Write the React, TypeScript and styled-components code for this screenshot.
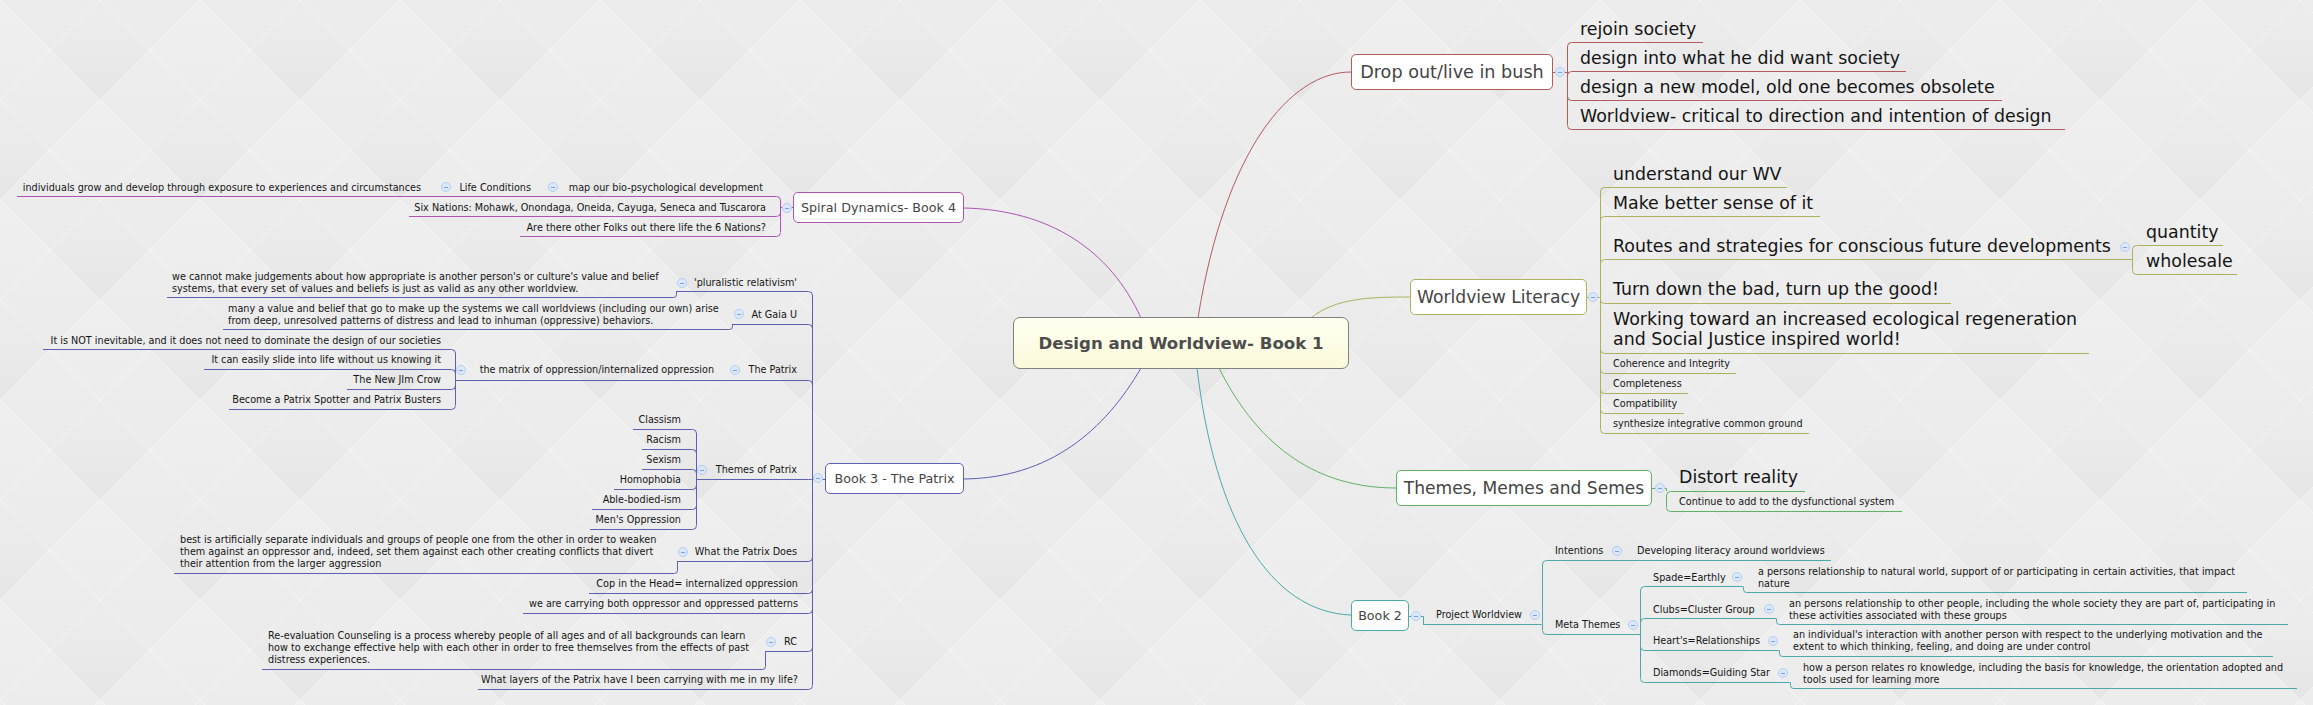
import React from 'react'
import styled, { createGlobalStyle } from 'styled-components'

const PURPLE = '#ae52b4'
const BLUE = '#5c5fb2'
const RED = '#b25a5c'
const OLIVE = '#aeb05c'
const GREEN = '#5eb262'
const TEAL = '#4ca9aa'
const R = 4

const GlobalStyle = createGlobalStyle`
  html, body {
    margin: 0;
    background: #e9e9e9;
    overflow: hidden;
  }
`

const Canvas = styled.div`
  position: relative;
  width: 2313px;
  height: 705px;
  overflow: hidden;
  font-family: "DejaVu Sans", "Liberation Sans", sans-serif;
`

const Layer = styled.svg`
  position: absolute;
  left: 0;
  top: 0;
`

const Topic = styled.div.attrs<{ $x: number; $y: number; $w: number; $h: number; $c: string }>((p) => ({
  style: { left: p.$x, top: p.$y, width: p.$w, height: p.$h, borderColor: p.$c },
}))<{ $size: number }>`
  position: absolute;
  box-sizing: border-box;
  display: flex;
  align-items: center;
  justify-content: center;
  background: #fff;
  border: 1px solid;
  border-radius: 5px;
  color: #444;
  font-size: ${(p) => p.$size}px;
  white-space: nowrap;
`

const CentralTopic = styled.div`
  position: absolute;
  left: 1013px;
  top: 317px;
  width: 336px;
  height: 52px;
  box-sizing: border-box;
  display: flex;
  align-items: center;
  justify-content: center;
  background: linear-gradient(180deg, #fffff2 0%, #fbf9da 100%);
  border: 1px solid #808080;
  border-radius: 7px;
  color: #4d4d4d;
  font-size: 16.6px;
  font-weight: 700;
  white-space: nowrap;
`

const Label = styled.div.attrs<{ $x: number; $y: number; $end?: boolean }>((p) => ({
  style: p.$end ? { right: 2313 - p.$x, top: p.$y + 1 } : { left: p.$x, top: p.$y + 1 },
}))<{ $big?: boolean }>`
  position: absolute;
  transform: translateY(-50%);
  color: #151515;
  font-size: ${(p) => (p.$big ? 17.4 : 9.67)}px;
  line-height: ${(p) => (p.$big ? 20 : 12)}px;
  white-space: pre;
`

const Fold = styled.i.attrs<{ $x: number; $y: number }>((p) => ({
  style: { left: p.$x - 5, top: p.$y - 5 },
}))`
  position: absolute;
  box-sizing: border-box;
  width: 10px;
  height: 10px;
  border: 1px solid #b4cdf3;
  border-radius: 50%;
  background: #dbe7fa;

  &::after {
    content: '';
    position: absolute;
    left: 2px;
    top: 3.5px;
    width: 4px;
    height: 1px;
    background: #7f9fdc;
  }
`

type Fan = { c: string; x: number; j: number; rows: [number, number][] }

// rails that hang off a vertical trunk, [far end of the rail, y]
const FANS: Fan[] = [
  { c: PURPLE, x: 780, j: 207, rows: [[17, 196], [409, 216], [520, 236]] },
  { c: BLUE, x: 812, j: 479, rows: [[676, 291], [732, 324], [455, 380], [696, 479], [677, 561], [589, 593], [523, 613], [765, 651], [478, 689]] },
  { c: BLUE, x: 455, j: 380, rows: [[43, 349], [204, 369], [347, 389], [229, 409]] },
  { c: BLUE, x: 696, j: 479, rows: [[633, 429], [642, 449], [642, 469], [614, 489], [592, 509], [590, 529]] },
  { c: RED, x: 1567, j: 72, rows: [[1703, 42], [1906, 71], [2002, 100], [2065, 129]] },
  { c: OLIVE, x: 1600, j: 297, rows: [[1787, 187], [1820, 216], [2132, 259], [1951, 303], [2089, 353], [1736, 373], [1688, 393], [1684, 413], [1809, 433]] },
  { c: OLIVE, x: 2132, j: 259, rows: [[2223, 245], [2237, 274]] },
  { c: GREEN, x: 1666, j: 501, rows: [[1805, 491], [1902, 511]] },
  { c: TEAL, x: 1542, j: 624, rows: [[1423, 624], [1831, 560], [1640, 634]] },
  { c: TEAL, x: 1640, j: 634, rows: [[1743, 586], [1776, 618], [1779, 650], [1790, 682]] },
]

// [far end, x of the step, upper y, lower y]
const STEPS: [string, number, number, number, number][] = [
  [BLUE, 167, 676, 291, 297],
  [BLUE, 223, 732, 324, 329],
  [BLUE, 174, 677, 561, 573],
  [BLUE, 262, 765, 651, 669],
  [TEAL, 2247, 1743, 586, 592],
  [TEAL, 2288, 1776, 618, 624],
  [TEAL, 2273, 1779, 650, 656],
  [TEAL, 2297, 1790, 682, 688],
]

const STUBS: [string, string][] = [
  [PURPLE, 'M780 207.5H793'],
  [BLUE, 'M812 479.5H825'],
  [RED, 'M1553 72.5H1567'],
  [OLIVE, 'M1587 297.5H1600'],
  [GREEN, 'M1652 488.5H1666.5V491'],
  [TEAL, 'M1409 616.5H1423.5V624'],
]

const CURVES: [string, string][] = [
  [PURPLE, 'M964 208C1050 210 1110 250 1141 318'],
  [BLUE, 'M964 479C1050 478 1105 430 1141 368'],
  [RED, 'M1351 72C1290 72 1225 150 1198 318'],
  [OLIVE, 'M1410 297C1370 297 1335 298 1311 318'],
  [GREEN, 'M1396 488C1320 488 1260 450 1219 368'],
  [TEAL, 'M1351 615C1270 612 1215 520 1197 368'],
]

const fanPaths = (f: Fan) => {
  const ys = f.rows.map((r) => r[1])
  const x = f.x + 0.5
  const trunk = `M${x} ${Math.min(...ys) + R}V${Math.max(...ys) - R}`
  const rails = f.rows.map(([from, y]) => {
    const s = x > from ? 1 : -1
    const yy = y + 0.5
    const bend = y < f.j ? R : y > f.j ? -R : 0
    return `M${from} ${yy}H${x - s * R}Q${x} ${yy} ${x} ${yy + bend}`
  })
  return [trunk, ...rails].join('')
}

const stepPath = (from: number, step: number, y1: number, y2: number) => {
  const s = step > from ? 1 : -1
  const x = step + 0.5
  return `M${x} ${y1 + 0.5}V${y2 + 0.5 - 3}Q${x} ${y2 + 0.5} ${x - s * 3} ${y2 + 0.5}H${from}`
}

const TOPICS: { t: string; x: number; y: number; w: number; h: number; c: string; size: number }[] = [
  { t: 'Spiral Dynamics- Book 4', x: 793, y: 192, w: 171, h: 31, c: PURPLE, size: 12.7 },
  { t: 'Book 3 - The Patrix', x: 825, y: 463, w: 139, h: 31, c: BLUE, size: 12.7 },
  { t: 'Drop out/live in bush', x: 1351, y: 54, w: 202, h: 36, c: RED, size: 17.6 },
  { t: 'Worldview Literacy', x: 1410, y: 279, w: 177, h: 36, c: OLIVE, size: 17.2 },
  { t: 'Themes, Memes and Semes', x: 1396, y: 470, w: 256, h: 36, c: GREEN, size: 17.1 },
  { t: 'Book 2', x: 1351, y: 600, w: 58, h: 31, c: TEAL, size: 12.7 },
]

// [text, x, centre y, right aligned]
const SMALL: [string, number, number, boolean?][] = [
  ['map our bio-psychological development', 763, 187, true],
  ['Life Conditions', 531, 187, true],
  ['individuals grow and develop through exposure to experiences and circumstances', 421, 187, true],
  ['Six Nations: Mohawk, Onondaga, Oneida, Cayuga, Seneca and Tuscarora', 766, 207, true],
  ['Are there other Folks out there life the 6 Nations?', 766, 227, true],
  ["'pluralistic relativism'", 797, 282, true],
  ["we cannot make judgements about how appropriate is another person's or culture's value and belief\nsystems, that every set of values and beliefs is just as valid as any other worldview.", 172, 282],
  ['At Gaia U', 797, 314, true],
  ['many a value and belief that go to make up the systems we call worldviews (including our own) arise\nfrom deep, unresolved patterns of distress and lead to inhuman (oppressive) behaviors.', 228, 314],
  ['The Patrix', 797, 369, true],
  ['the matrix of oppression/internalized oppression', 714, 369, true],
  ['It is NOT inevitable, and it does not need to dominate the design of our societies', 441, 340, true],
  ['It can easily slide into life without us knowing it', 441, 359, true],
  ['The New JIm Crow', 441, 379, true],
  ['Become a Patrix Spotter and Patrix Busters', 441, 399, true],
  ['Themes of Patrix', 797, 469, true],
  ['Classism', 681, 419, true],
  ['Racism', 681, 439, true],
  ['Sexism', 681, 459, true],
  ['Homophobia', 681, 479, true],
  ['Able-bodied-ism', 681, 499, true],
  ["Men's Oppression", 681, 519, true],
  ['What the Patrix Does', 797, 551, true],
  ['best is artificially separate individuals and groups of people one from the other in order to weaken\nthem against an oppressor and, indeed, set them against each other creating conflicts that divert\ntheir attention from the larger aggression', 180, 551],
  ['Cop in the Head= internalized oppression', 798, 583, true],
  ['we are carrying both oppressor and oppressed patterns', 798, 603, true],
  ['RC', 797, 641, true],
  ['Re-evaluation Counseling is a process whereby people of all ages and of all backgrounds can learn\nhow to exchange effective help with each other in order to free themselves from the effects of past\ndistress experiences.', 268, 647],
  ['What layers of the Patrix have I been carrying with me in my life?', 798, 679, true],
  ['Coherence and Integrity', 1613, 363],
  ['Completeness', 1613, 383],
  ['Compatibility', 1613, 403],
  ['synthesize integrative common ground', 1613, 423],
  ['Continue to add to the dysfunctional system', 1679, 501],
  ['Project Worldview', 1436, 614],
  ['Intentions', 1555, 550],
  ['Developing literacy around worldviews', 1637, 550],
  ['Meta Themes', 1555, 624],
  ['Spade=Earthly', 1653, 577],
  ['a persons relationship to natural world, support of or participating in certain activities, that impact\nnature', 1758, 577],
  ['Clubs=Cluster Group', 1653, 609],
  ['an persons relationship to other people, including the whole society they are part of, participating in\nthese activities associated with these groups', 1789, 609],
  ["Heart's=Relationships", 1653, 640],
  ["an individual's interaction with another person with respect to the underlying motivation and the\nextent to which thinking, feeling, and doing are under control", 1793, 640],
  ['Diamonds=Guiding Star', 1653, 672],
  ['how a person relates ro knowledge, including the basis for knowledge, the orientation adopted and\ntools used for learning more', 1803, 673],
]

const BIG: [string, number, number][] = [
  ['rejoin society', 1580, 28],
  ['design into what he did want society', 1580, 57],
  ['design a new model, old one becomes obsolete', 1580, 86],
  ['Worldview- critical to direction and intention of design', 1580, 115],
  ['understand our WV', 1613, 173],
  ['Make better sense of it', 1613, 202],
  ['Routes and strategies for conscious future developments', 1613, 245],
  ['quantity', 2146, 231],
  ['wholesale', 2146, 260],
  ['Turn down the bad, turn up the good!', 1613, 288],
  ['Working toward an increased ecological regeneration\nand Social Justice inspired world!', 1613, 328],
  ['Distort reality', 1679, 476],
]

const FOLDS: [number, number][] = [
  [446, 187], [553, 187], [787, 208],
  [682, 283], [739, 314], [735, 370], [461, 370], [702, 470], [683, 552], [771, 642], [818, 478],
  [1560, 72], [1593, 297], [2125, 247], [1660, 488],
  [1416, 616], [1535, 615], [1617, 551], [1633, 625], [1737, 577], [1769, 609], [1773, 641], [1783, 673],
]

const Backdrop = () => (
  <Layer width="2313" height="705">
    <defs>
      <linearGradient id="pane" x1="0" y1="0" x2="0" y2="1">
        <stop offset="0" stopColor="#efefef" />
        <stop offset="0.7" stopColor="#ebebeb" />
        <stop offset="1" stopColor="#e5e5e5" />
      </linearGradient>
      <pattern id="quilt" width="200" height="200" patternUnits="userSpaceOnUse">
        <polygon points="0,0 100,100 0,200 -100,100" fill="url(#pane)" />
        <polygon points="200,0 300,100 200,200 100,100" fill="url(#pane)" />
        <polygon points="100,100 200,200 100,300 0,200" fill="url(#pane)" />
        <polygon points="100,-100 200,0 100,100 0,0" fill="url(#pane)" />
        <path
          d="M0 0L200 200M100 0L200 100M0 100L100 200M200 0L0 200M100 0L0 100M200 100L100 200"
          stroke="#fff"
          strokeOpacity="0.6"
          strokeWidth="0.8"
        />
      </pattern>
    </defs>
    <rect width="2313" height="705" fill="url(#quilt)" />
  </Layer>
)

const Connectors = () => (
  <Layer width="2313" height="705" fill="none" strokeWidth="1">
    {CURVES.map(([c, d]) => (
      <path key={d} d={d} stroke={c} />
    ))}
    {FANS.map((f) => (
      <path key={`${f.x}-${f.j}`} d={fanPaths(f)} stroke={f.c} />
    ))}
    {STEPS.map(([c, from, step, y1, y2]) => (
      <path key={from} d={stepPath(from, step, y1, y2)} stroke={c} />
    ))}
    {STUBS.map(([c, d]) => (
      <path key={d} d={d} stroke={c} />
    ))}
  </Layer>
)

export default function App() {
  return (
    <Canvas>
      <GlobalStyle />
      <Backdrop />
      <Connectors />
      <CentralTopic>Design and Worldview- Book 1</CentralTopic>
      {TOPICS.map((t) => (
        <Topic key={t.t} $x={t.x} $y={t.y} $w={t.w} $h={t.h} $c={t.c} $size={t.size}>
          {t.t}
        </Topic>
      ))}
      {SMALL.map(([text, x, y, end]) => (
        <Label key={text} $x={x} $y={y} $end={end}>
          {text}
        </Label>
      ))}
      {BIG.map(([text, x, y]) => (
        <Label key={text} $x={x} $y={y} $big>
          {text}
        </Label>
      ))}
      {FOLDS.map(([x, y]) => (
        <Fold key={`${x}-${y}`} $x={x} $y={y} />
      ))}
    </Canvas>
  )
}
